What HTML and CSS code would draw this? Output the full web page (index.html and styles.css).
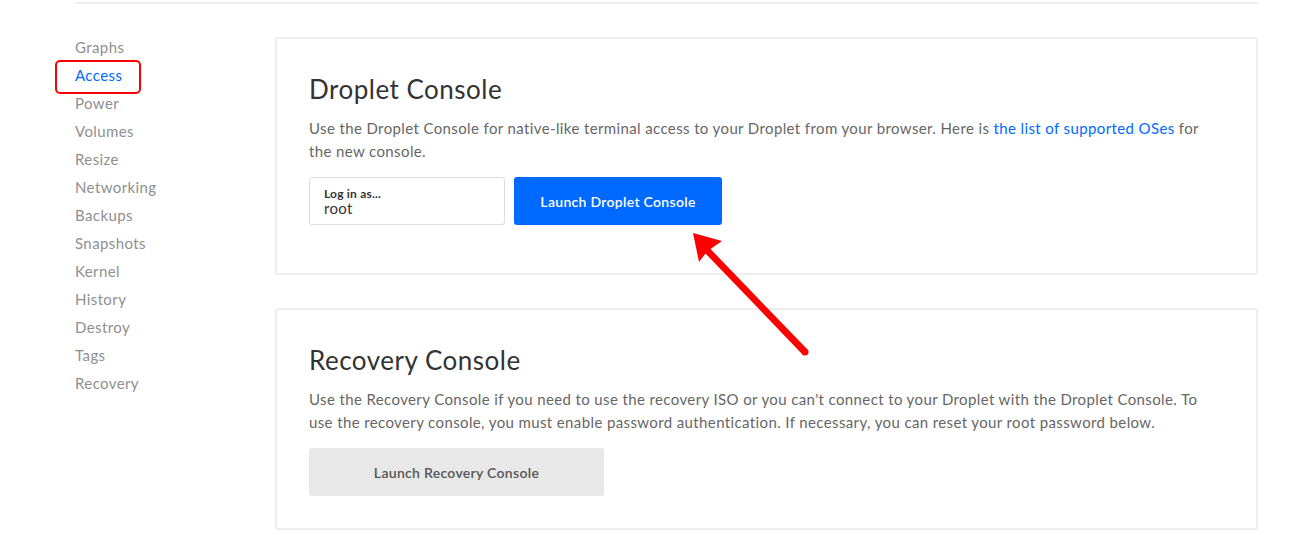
FILE: index.html
```html
<!DOCTYPE html>
<html>
<head>
<meta charset="utf-8">
<link rel="stylesheet" href="styles.css">
</head>
<body>
<div class="page">
  <div class="topline"></div>
  <div class="layout">
    <nav class="sidebar">
      <a class="nav-item">Graphs</a>
      <a class="nav-item active">Access</a>
      <a class="nav-item">Power</a>
      <a class="nav-item">Volumes</a>
      <a class="nav-item">Resize</a>
      <a class="nav-item">Networking</a>
      <a class="nav-item">Backups</a>
      <a class="nav-item">Snapshots</a>
      <a class="nav-item">Kernel</a>
      <a class="nav-item">History</a>
      <a class="nav-item">Destroy</a>
      <a class="nav-item">Tags</a>
      <a class="nav-item">Recovery</a>
    </nav>
    <main class="content">
      <section class="card card-first">
        <h2 class="card-title">Droplet Console</h2>
        <p class="card-text">Use the Droplet Console for native-like terminal access to your Droplet from your browser. Here is <a class="link">the list of supported OSes</a> for the new console.</p>
        <div class="actions">
          <div class="login-box">
            <span class="login-label">Log in as...</span>
            <span class="login-value">root</span>
          </div>
          <button class="btn btn-primary">Launch Droplet Console</button>
        </div>
      </section>
      <section class="card">
        <h2 class="card-title">Recovery Console</h2>
        <p class="card-text">Use the Recovery Console if you need to use the recovery ISO or you can't connect to your Droplet with the Droplet Console. To use the recovery console, you must enable password authentication. If necessary, you can reset your root password below.</p>
        <div class="actions">
          <button class="btn btn-secondary">Launch Recovery Console</button>
        </div>
      </section>
    </main>
  </div>
  <svg class="arrow" width="1291" height="535" viewBox="0 0 1291 535">
    <polygon fill="#ff0000" points="693,231 722,239 710.5,247 807.5,347.6 802.5,352.4 705.5,251.5 699,260"/>
    <circle cx="805" cy="350" r="3.5" fill="#ff0000"/>
  </svg>
</div>
</body>
</html>
```
FILE: styles.css
```css
* { box-sizing: border-box; }
html, body { margin: 0; padding: 0; background: #fff; }
body {
  font-family: "Lato", "Open Sans", sans-serif;
  color: #333;
  width: 1291px;
  height: 535px;
  overflow: hidden;
}
.page { position: relative; width: 1291px; height: 535px; }
.topline {
  margin: 2px 33px 0 75px;
  height: 2px;
  background: #eeeeee;
}
.layout {
  display: flex;
  padding-left: 75px;
  padding-top: 33px;
  padding-right: 33px;
}
.sidebar {
  width: 200px;
  margin-top: -4px;
  display: flex;
  flex-direction: column;
  position: relative;
}
.nav-item {
  font-size: 15px;
  line-height: 28px;
  letter-spacing: 0.4px;
  color: #8f8f8f;
  position: relative;
}
.nav-item.active { color: #0069ff; }
.nav-item.active::before {
  content: "";
  box-sizing: border-box;
  position: absolute;
  left: -20px;
  top: -1px;
  width: 86px;
  height: 34px;
  border: 2px solid #f00;
  border-radius: 5px;
}
.content {
  flex: 1;
  display: flex;
  flex-direction: column;
  gap: 33px;
}
.card {
  border: 2px solid #eeeeee;
  border-radius: 3px;
  padding: 34px 46px 32px 32px;
}
.card-first { padding-bottom: 48px; }
.card-title {
  margin: 0;
  font-size: 26px;
  line-height: 32px;
  font-weight: 400;
  letter-spacing: 0.5px;
  color: #333;
}
.card-text {
  margin: 12px 0 14px;
  font-size: 15px;
  line-height: 23px;
  letter-spacing: 0.38px;
  color: #666;
}
.link { color: #0069ff; }
.actions { display: flex; gap: 9px; }
.login-box {
  width: 196px;
  height: 48px;
  border: 1px solid #dcdcdc;
  border-radius: 3px;
  padding: 9px 14px 0;
  display: flex;
  flex-direction: column;
}
.login-label { font-size: 12px; font-weight: 700; line-height: 13px; color: #333; letter-spacing: 0.2px; }
.login-value { font-size: 15px; line-height: 16px; color: #333; letter-spacing: 0.3px; }
.btn {
  height: 48px;
  border: 0;
  border-radius: 3px;
  font-family: inherit;
  font-size: 14px;
  font-weight: 600;
  letter-spacing: 0.3px;
}
.btn-primary { width: 208px; background: #0069ff; color: #fff; }
.btn-secondary { width: 295px; background: #e8e8e8; color: #555; }
.arrow { position: absolute; left: 0; top: 0; pointer-events: none; }
```
